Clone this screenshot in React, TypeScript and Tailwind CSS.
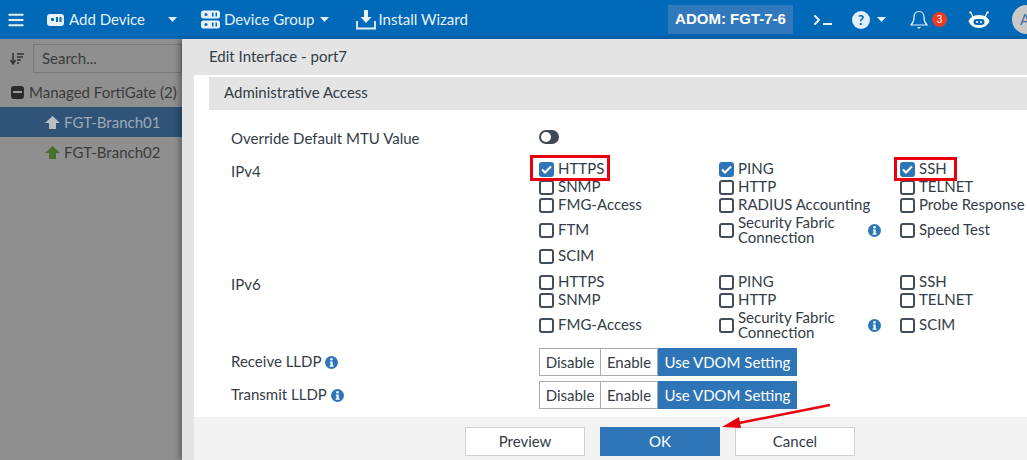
import { AlignJustify, ChevronRight } from "lucide-react";

function Caret({ className }: { className?: string }) {
  return (
    <svg width="9" height="5" viewBox="0 0 9 5" className={className}>
      <path d="M0 0h9L4.5 5z" fill="#e3effa" />
    </svg>
  );
}

function InfoDot({ className }: { className?: string }) {
  return (
    <svg width="13" height="13" viewBox="0 0 13 13" className={`shrink-0 ${className ?? ""}`}>
      <circle cx="6.5" cy="6.5" r="6.5" fill="#2e75b8" />
      <circle cx="6.5" cy="3.3" r="1.3" fill="#fff" />
      <path d="M4.8 5.4h2.9v4.1h.9v1.2H4.6V9.5h.9V6.6h-.7z" fill="#fff" />
    </svg>
  );
}

function Check({ label, on, tall, info }: { label: string; on?: boolean; tall?: boolean; info?: boolean }) {
  return (
    <div className="flex items-center gap-[4px] h-full">
      {on ? (
        <span className="w-[15px] h-[15px] rounded-[3px] bg-[#2e75b8] flex items-center justify-center shrink-0">
          <svg width="11" height="9" viewBox="0 0 11 9">
            <path d="M1 4.5l3 3L10 1.5" stroke="#fff" strokeWidth="2" fill="none" />
          </svg>
        </span>
      ) : (
        <span className="w-[15px] h-[15px] rounded-[3px] border-2 border-[#434d5a] bg-white shrink-0" />
      )}
      <span className={tall ? "leading-[15px] w-[126px] whitespace-normal" : "leading-[18px] whitespace-nowrap pb-[2px]"}>{label}</span>
      {info && <InfoDot />}
    </div>
  );
}

function Segmented() {
  return (
    <div className="flex h-[28px] text-[15px] leading-[26px] w-[258px]">
      <div className="border border-[#a9adb2] px-[5px] w-[62px] text-center">Disable</div>
      <div className="border border-l-0 border-[#a9adb2] w-[57px] text-center">Enable</div>
      <div className="bg-[#2e75b8] text-white text-center w-[139px] leading-[28px]">Use VDOM Setting</div>
    </div>
  );
}

function BotIcon() {
  return (
    <svg width="24" height="24" viewBox="0 0 24 24">
      <path d="M4 5l2 4M20 5l-2 4" stroke="#e3effa" strokeWidth="1.4" />
      <circle cx="3.5" cy="4.5" r="1.2" fill="#e3effa" />
      <circle cx="20.5" cy="4.5" r="1.2" fill="#e3effa" />
      <path d="M12 7c6 0 9 3 10.500 6-1.500 4-5 7-10.500 7S3 17 1.500 13C3 10 6 7 12 7z" fill="#fff" />
      <rect x="6.500" y="11" width="11" height="6" rx="3" fill="#0069b8" />
      <circle cx="10" cy="14" r="1" fill="#fff" />
      <circle cx="14" cy="14" r="1" fill="#fff" />
    </svg>
  );
}

export default function App() {
  return (
    <div className="relative w-[1027px] h-[460px] overflow-hidden flex flex-col bg-white text-[15px] text-[#333c47] font-['Lato','Open_Sans',sans-serif]">
      {/* top bar */}
      <div className="h-[39px] bg-[#0069b8] flex items-center text-[#e8f1f9] shrink-0 whitespace-nowrap">
        <AlignJustify size={18} strokeWidth={2.4} className="ml-[7px] shrink-0 text-[#e3effa]" />
        <svg width="18" height="14" viewBox="0 0 18 14" className="ml-[22px] shrink-0">
          <rect width="17" height="12" y="1" rx="3" fill="#e8f1f9" />
          <rect x="4" y="5" width="3" height="3" rx="1" fill="#0069b8" />
          <rect x="9" y="4" width="2" height="5" fill="#0069b8" />
          <rect x="12.500" y="4" width="2" height="5" fill="#0069b8" />
        </svg>
        <span className="ml-[4px]">Add Device</span>
        <Caret className="ml-[23px] shrink-0" />
        <svg width="20" height="19" viewBox="0 0 20 19" className="ml-[24px] shrink-0">
          <rect width="19" height="8" y="0.500" rx="2.500" fill="#e8f1f9" />
          <rect width="19" height="8" y="10.500" rx="2.500" fill="#e8f1f9" />
          <circle cx="5" cy="4.500" r="1.500" fill="#0069b8" />
          <circle cx="5" cy="14.500" r="1.500" fill="#0069b8" />
          <path d="M11 2.500h1.500v4H11zM14.500 2.500H16v4h-1.500zM11 12.500h1.500v4H11zM14.500 12.500H16v4h-1.500z" fill="#0069b8" />
        </svg>
        <span className="ml-[3px]">Device Group</span>
        <Caret className="ml-[6px] shrink-0" />
        <svg width="20" height="20" viewBox="0 0 20 20" className="ml-[27px] shrink-0">
          <path d="M8 0h4v7h3.500L10 13 4.500 7H8z" fill="#e8f1f9" />
          <path d="M1 11v7.500h18V11" stroke="#e8f1f9" strokeWidth="1.800" fill="none" />
        </svg>
        <span className="ml-[2px]">Install Wizard</span>
        <div className="ml-auto w-[125px] h-[29px] bg-[#3278bd] flex items-center justify-center text-white font-bold text-[15px] font-['Liberation_Sans',sans-serif] shrink-0">
          ADOM: FGT-7-6
        </div>
        <div className="ml-[18px] flex items-center text-[#e8f1f9]">
          <ChevronRight size={16} strokeWidth={3} className="-ml-[2px]" />
          <span className="w-[9px] h-[2px] bg-[#e8f1f9] mt-[9px] -ml-[2px]" />
        </div>
        <div className="ml-[20px] w-[18px] h-[18px] rounded-full bg-[#e3effa] flex items-center justify-center text-[#0069b8] font-bold text-[14px] shrink-0">?</div>
        <Caret className="ml-[7px] shrink-0" />
        <svg width="18" height="20" viewBox="0 0 18 20" className="ml-[24px] shrink-0">
          <path d="M9 1.500c-3.500 0-5 3-5 6 0 4-1 5.500-3 7.500h16c-2-2-3-3.500-3-7.500 0-3-1.500-6-5-6z" stroke="#e8f1f9" strokeWidth="1.200" fill="none" />
          <path d="M7 17h4l-2 2z" fill="#e8f1f9" />
        </svg>
        <span className="ml-[4px] w-[15px] h-[15px] rounded-full bg-[#ef3a24] text-white text-[10px] leading-[15px] text-center font-['Liberation_Sans',sans-serif] shrink-0">3</span>
        <div className="ml-[20px] flex items-center shrink-0"><BotIcon /></div>
        <div className="ml-[21px] -mr-[14px] w-[29px] h-[29px] rounded-full bg-[#c9c9c9] shrink-0 text-[#4a6fa5] text-[15px] leading-[29px] pl-[8px]">A</div>
      </div>

      <div className="flex flex-1 min-h-0">
        {/* dimmed tree */}
        <div className="w-[182px] shrink-0 bg-[#8f8f8f] text-[#3b3b3b] overflow-hidden">
          <div className="h-[38px] flex items-center pl-[10px] pt-[1px]">
            <svg width="14" height="12" viewBox="0 0 14 12">
              <path d="M3 0v9M0.500 7L3 11l2.500-4" stroke="#333" strokeWidth="1.500" fill="none" />
              <path d="M7 1h7M7 4h6M7 7h4M7 10h2" stroke="#333" strokeWidth="1.500" />
            </svg>
            <div className="ml-[9px] h-[29px] flex-1 border border-[#7a7a7a] pl-[8px] leading-[27px]">Search...</div>
          </div>
          <div className="h-[30px] flex items-center pl-[11px]">
            <span className="w-[13px] h-[13px] rounded-[3px] bg-[#2b2b2b] flex items-center justify-center shrink-0">
              <span className="w-[9px] h-[2px] bg-[#9a9a9a]" />
            </span>
            <span className="ml-[5px] whitespace-nowrap">Managed FortiGate (2)</span>
          </div>
          <div className="h-[30px] bg-[#2f5478] flex items-center pl-[45px] text-[#9fa9b3]">
            <svg width="15" height="13" viewBox="0 0 15 13"><path d="M7.500 0L15 7h-4v6H4V7H0z" fill="#b9bec3" /></svg>
            <span className="ml-[4px]">FGT-Branch01</span>
          </div>
          <div className="h-[30px] flex items-center pl-[45px]">
            <svg width="15" height="13" viewBox="0 0 15 13"><path d="M7.500 0L15 7h-4v6H4V7H0z" fill="#47702c" /></svg>
            <span className="ml-[4px]">FGT-Branch02</span>
          </div>
        </div>

        {/* edit slide-in */}
        <div className="relative flex-1 flex flex-col min-w-0 bg-[#e4e4e4] shadow-[-3px_0_6px_rgba(0,0,0,0.3)]">
          <div className="h-[36px] pl-[27px] leading-[34px] shrink-0">Edit Interface - port7</div>
          <div className="flex-1 min-h-0 ml-[12px] bg-white pl-[15px] pt-[2px] overflow-hidden">
            <div className="h-[33px] bg-[#e4e4e4] pl-[15px] leading-[30px]">Administrative Access</div>
            <div className="pl-[22px]">
              <div className="h-[50px] flex pt-[17px]">
                <div className="w-[308px] leading-[22px]">Override Default MTU Value</div>
                <div className="relative w-[20px] h-[14px] mt-[3px] rounded-full bg-[#3f4854]">
                  <span className="absolute left-[2px] top-[2px] w-[10px] h-[10px] rounded-full bg-white" />
                </div>
              </div>

              <div className="flex">
                <div className="w-[308px] leading-[22px]">IPv4</div>
                <div className="grid grid-cols-[180px_181px_1fr] grid-rows-[18px_18px_18px_32px_20px] whitespace-nowrap">
                  <Check label="HTTPS" on />
                  <Check label="PING" on />
                  <Check label="SSH" on />
                  <Check label="SNMP" />
                  <Check label="HTTP" />
                  <Check label="TELNET" />
                  <Check label="FMG-Access" />
                  <Check label="RADIUS Accounting" />
                  <Check label="Probe Response" />
                  <Check label="FTM" />
                  <Check label="Security Fabric Connection" tall info />
                  <Check label="Speed Test" />
                  <Check label="SCIM" />
                </div>
              </div>

              <div className="flex mt-[7px]">
                <div className="w-[308px] leading-[22px]">IPv6</div>
                <div className="grid grid-cols-[180px_181px_1fr] grid-rows-[18px_18px_32px] whitespace-nowrap">
                  <Check label="HTTPS" />
                  <Check label="PING" />
                  <Check label="SSH" />
                  <Check label="SNMP" />
                  <Check label="HTTP" />
                  <Check label="TELNET" />
                  <Check label="FMG-Access" />
                  <Check label="Security Fabric Connection" tall info />
                  <Check label="SCIM" />
                </div>
              </div>

              <div className="flex items-center mt-[7px]">
                <div className="w-[308px] flex items-center gap-[4px] pb-[2px]">Receive LLDP <InfoDot className="mt-[3px] -ml-[1px]" /></div>
                <Segmented />
              </div>
              <div className="flex items-center mt-[5px]">
                <div className="w-[308px] flex items-center gap-[4px] pb-[2px]">Transmit LLDP <InfoDot className="mt-[3px]" /></div>
                <Segmented />
              </div>
            </div>
          </div>
          <div className="h-[43px] shrink-0 ml-[12px] bg-[#f3f3f3] flex pl-[271px] pt-[10px] gap-[15px] text-[15px]">
            <div className="w-[120px] h-[29px] bg-white border border-[#cfcfcf] text-center leading-[27px]">Preview</div>
            <div className="w-[120px] h-[29px] bg-[#2e75b8] text-white text-center leading-[29px]">OK</div>
            <div className="w-[120px] h-[29px] bg-white border border-[#cfcfcf] text-center leading-[27px]">Cancel</div>
          </div>
        </div>
      </div>

      {/* annotations on top of the screenshot */}
      <div className="absolute left-[530px] top-[155px] w-[80px] h-[26px] border-[3px] border-[#e8000d]" />
      <div className="absolute left-[894px] top-[157px] w-[63px] h-[24px] border-[3px] border-[#e8000d]" />
      <svg className="absolute left-[720px] top-[402px]" width="112" height="28" viewBox="0 0 112 28">
        <path d="M110 3L14 22" stroke="#e8000d" strokeWidth="2.500" />
        <path d="M2 25l17-10 2 11z" fill="#e8000d" />
      </svg>
    </div>
  );
}
